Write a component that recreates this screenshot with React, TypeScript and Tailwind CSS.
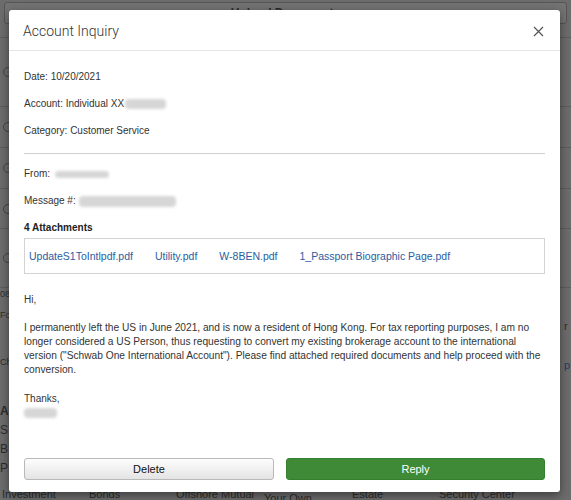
import React from 'react';

const attachments = ['UpdateS1ToIntlpdf.pdf', 'Utility.pdf', 'W-8BEN.pdf', '1_Passport Biographic Page.pdf'];

const bottomNav = ['Investment Income', 'Bonds', 'Offshore Mutual', 'Your Own', 'Estate', 'Security Center'];

// blurred-out personal data
const Redacted: React.FC<{ className: string }> = ({ className }) => (
  <span className={`inline-block align-middle rounded-sm bg-[#d6d6d6] blur-[1.5px] ${className}`} />
);

const CloseIcon = () => (
  <svg width="11" height="11" viewBox="0 0 11 11" fill="none" stroke="#555" strokeWidth="1.2">
    <path d="M1 1 L10 10 M10 1 L1 10" />
  </svg>
);

export default function App() {
  return (
    <div className="relative w-[571px] h-[500px] overflow-hidden bg-[#6c6c6c] font-['Liberation_Sans',Arial,sans-serif]">
      {/* Page behind the dialog, dimmed by the backdrop */}
      <div className="flex flex-col h-full text-[#2c2c2c] text-[11px]">
        <div className="mx-1 mt-[2px] h-[22px] rounded-[3px] border border-[#555] bg-[#737373] flex items-center justify-center text-[12px] font-bold">
          Upload Documents
        </div>
        <div className="h-[14px] border-b border-[#5c5c5c]" />
        {[69, 41, 41, 40, 59].map((h, i) => (
          <div key={i} style={{ height: h }} className="border-b border-[#5c5c5c] flex items-center pl-[3px]">
            <span className="w-[10px] h-[10px] rounded-full border border-[#444]" />
          </div>
        ))}
        <div className="flex justify-between flex-1">
          <div className="flex flex-col text-[9px] leading-[11px]">
            <span className="mt-[1px]">08</span>
            <span className="mt-[10px]">Fod</span>
            <span className="mt-[36px]">Che</span>
            <span className="mt-[38px] text-[12px] font-bold">A</span>
            <span className="mt-[8px] text-[12px]">S</span>
            <span className="mt-[8px] text-[12px]">B</span>
            <span className="mt-[8px] text-[12px]">P</span>
          </div>
          <div className="flex flex-col text-[11px] pr-[1px]">
            <span className="mt-[30px]">r</span>
            <span className="mt-[22px] text-[#1e3d63]">p</span>
          </div>
        </div>
        <div className="flex items-start h-[12px] leading-[12px] text-[11px] pl-[2px]">
          {bottomNav.map((n, i) => (
            <span
              key={n}
              className={
                i === 0 ? 'w-[87px]' :
                i === 1 ? 'w-[87px]' :
                i === 2 ? 'w-[88px]' :
                i === 3 ? 'w-[88px] mt-[4px]' :
                i === 4 ? 'w-[87px]' : ''
              }
            >
              {n}
            </span>
          ))}
        </div>
      </div>

      {/* Dialog */}
      <div className="absolute left-[9px] top-[10px] w-[551px] h-[482px] bg-white rounded-[3px] shadow-[0_3px_10px_rgba(0,0,0,0.45)] flex flex-col text-[#333]">
        <div className="h-[41px] shrink-0 border-b border-[#e5e5e5] flex items-center justify-between pl-[14px] pr-[16px]">
          <h3 className="font-['Roboto',sans-serif] font-light text-[14px] text-[#333] mt-[2px]">Account Inquiry</h3>
          <button className="w-[11px] h-[11px] flex items-center justify-center mt-[2px]">
            <CloseIcon />
          </button>
        </div>

        <div className="flex-1 px-[15px] pt-[19px] text-[10px] leading-[14px]">
          <p>Date: 10/20/2021</p>
          <p className="mt-[13px]">
            Account: Individual XX<Redacted className="w-[41px] h-[10px] ml-[1px]" />
          </p>
          <p className="mt-[13px]">Category: Customer Service</p>
          <hr className="mt-[15px] border-0 border-t border-[#cfcfcf]" />
          <p className="mt-[13px]">
            From: <Redacted className="w-[54px] h-[7px] ml-[2px]" />
          </p>
          <p className="mt-[13px]">
            Message #: <Redacted className="w-[97px] h-[11px] ml-[1px]" />
          </p>
          <p className="mt-[13px] font-bold text-[#222]">4 Attachments</p>
          <div className="mt-[3px] h-[36px] border border-[#d3d3d3] flex items-center gap-[22px] pl-[4px] text-[10.5px]">
            {attachments.map(a => (
              <a key={a} href="#" className="text-[#2a5d9f]">
                {a}
              </a>
            ))}
          </div>
          <p className="mt-[19px]">Hi,</p>
          <p className="mt-[14px] text-[10.2px]">
            I permanently left the US in June 2021, and is now a resident of Hong Kong. For tax reporting purposes, I am no
            longer considered a US Person, thus requesting to convert my existing brokerage account to the international
            version ("Schwab One International Account"). Please find attached required documents and help proceed with the
            conversion.
          </p>
          <p className="mt-[15px]">
            Thanks,
            <br />
            <Redacted className="w-[33px] h-[10px]" />
          </p>
        </div>

        <div className="shrink-0 flex gap-[12px] px-[15px] pb-[12px]">
          <button className="w-[250px] h-[22px] rounded-[3px] border border-[#b9b9b9] bg-gradient-to-b from-[#fdfdfd] to-[#e4e4e4] text-[11px] text-[#111]">
            Delete
          </button>
          <button className="flex-1 h-[22px] rounded-[3px] border border-[#367f2f] bg-[#3f8a37] text-[11px] text-white">
            Reply
          </button>
        </div>
      </div>
    </div>
  );
}
